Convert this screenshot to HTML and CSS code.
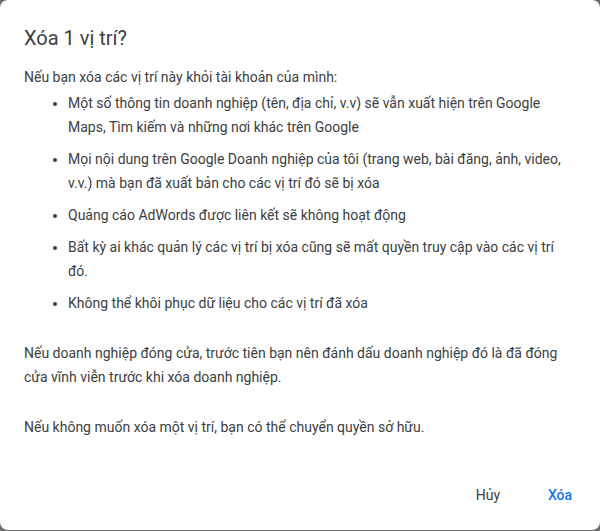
FILE: index.html
```html
<!DOCTYPE html>
<html lang="vi">
<head>
<meta charset="utf-8">
<link rel="stylesheet" href="styles.css">
</head>
<body>
<div class="dialog">
  <h2 class="title">Xóa 1 vị trí?</h2>
  <div class="content">
    <p class="intro">Nếu bạn xóa các vị trí này khỏi tài khoản của mình:</p>
    <ul class="list">
      <li>Một số thông tin doanh nghiệp (tên, địa chỉ, v.v) sẽ vẫn xuất hiện trên Google Maps, Tìm kiếm và những nơi khác trên Google</li>
      <li>Mọi nội dung trên Google Doanh nghiệp của tôi (trang web, bài đăng, ảnh, video, v.v.) mà bạn đã xuất bản cho các vị trí đó sẽ bị xóa</li>
      <li>Quảng cáo AdWords được liên kết sẽ không hoạt động</li>
      <li>Bất kỳ ai khác quản lý các vị trí bị xóa cũng sẽ mất quyền truy cập vào các vị trí đó.</li>
      <li>Không thể khôi phục dữ liệu cho các vị trí đã xóa</li>
    </ul>
    <p class="para">Nếu doanh nghiệp đóng cửa, trước tiên bạn nên đánh dấu doanh nghiệp đó là đã đóng cửa vĩnh viễn trước khi xóa doanh nghiệp.</p>
    <p class="para">Nếu không muốn xóa một vị trí, bạn có thể chuyển quyền sở hữu.</p>
  </div>
  <div class="actions">
    <button class="btn btn-cancel">Hủy</button>
    <button class="btn btn-primary">Xóa</button>
  </div>
</div>
</body>
</html>
```
FILE: styles.css
```css
html, body {
  margin: 0;
  padding: 0;
}
body {
  background: #6e6e6e;
  font-family: Roboto, "Noto Sans", Arial, sans-serif;
  width: 600px;
  height: 531px;
  overflow: hidden;
}
.dialog {
  background: #fff;
  width: 600px;
  height: 530px;
  border-radius: 8px;
  box-sizing: border-box;
  display: flex;
  flex-direction: column;
}
.title {
  margin: 0;
  padding: 24px 24px 0;
  font-size: 20px;
  font-weight: 400;
  line-height: 28px;
  color: #3c4043;
}
.content {
  padding: 13px 24px 0;
  font-size: 14px;
  line-height: 24px;
  color: #3c4043;
  flex: 1;
}
.intro {
  margin: 0;
}
.list {
  margin: 2px 0 0;
  padding-left: 44px;
}
.list li {
  margin-bottom: 8px;
}
.para {
  margin: 26px 0 0;
}
.actions {
  display: flex;
  justify-content: flex-end;
  gap: 8px;
  padding: 0 8px 17px;
}
.btn {
  font-family: Roboto, "Noto Sans", Arial, sans-serif;
  font-size: 14px;
  font-weight: 500;
  height: 36px;
  min-width: 64px;
  padding: 0 8px;
  border: none;
  background: transparent;
  border-radius: 4px;
  cursor: pointer;
}
.btn-cancel {
  color: #3c4043;
  font-weight: 400;
}
.btn-primary {
  color: #1a73e8;
}
```
